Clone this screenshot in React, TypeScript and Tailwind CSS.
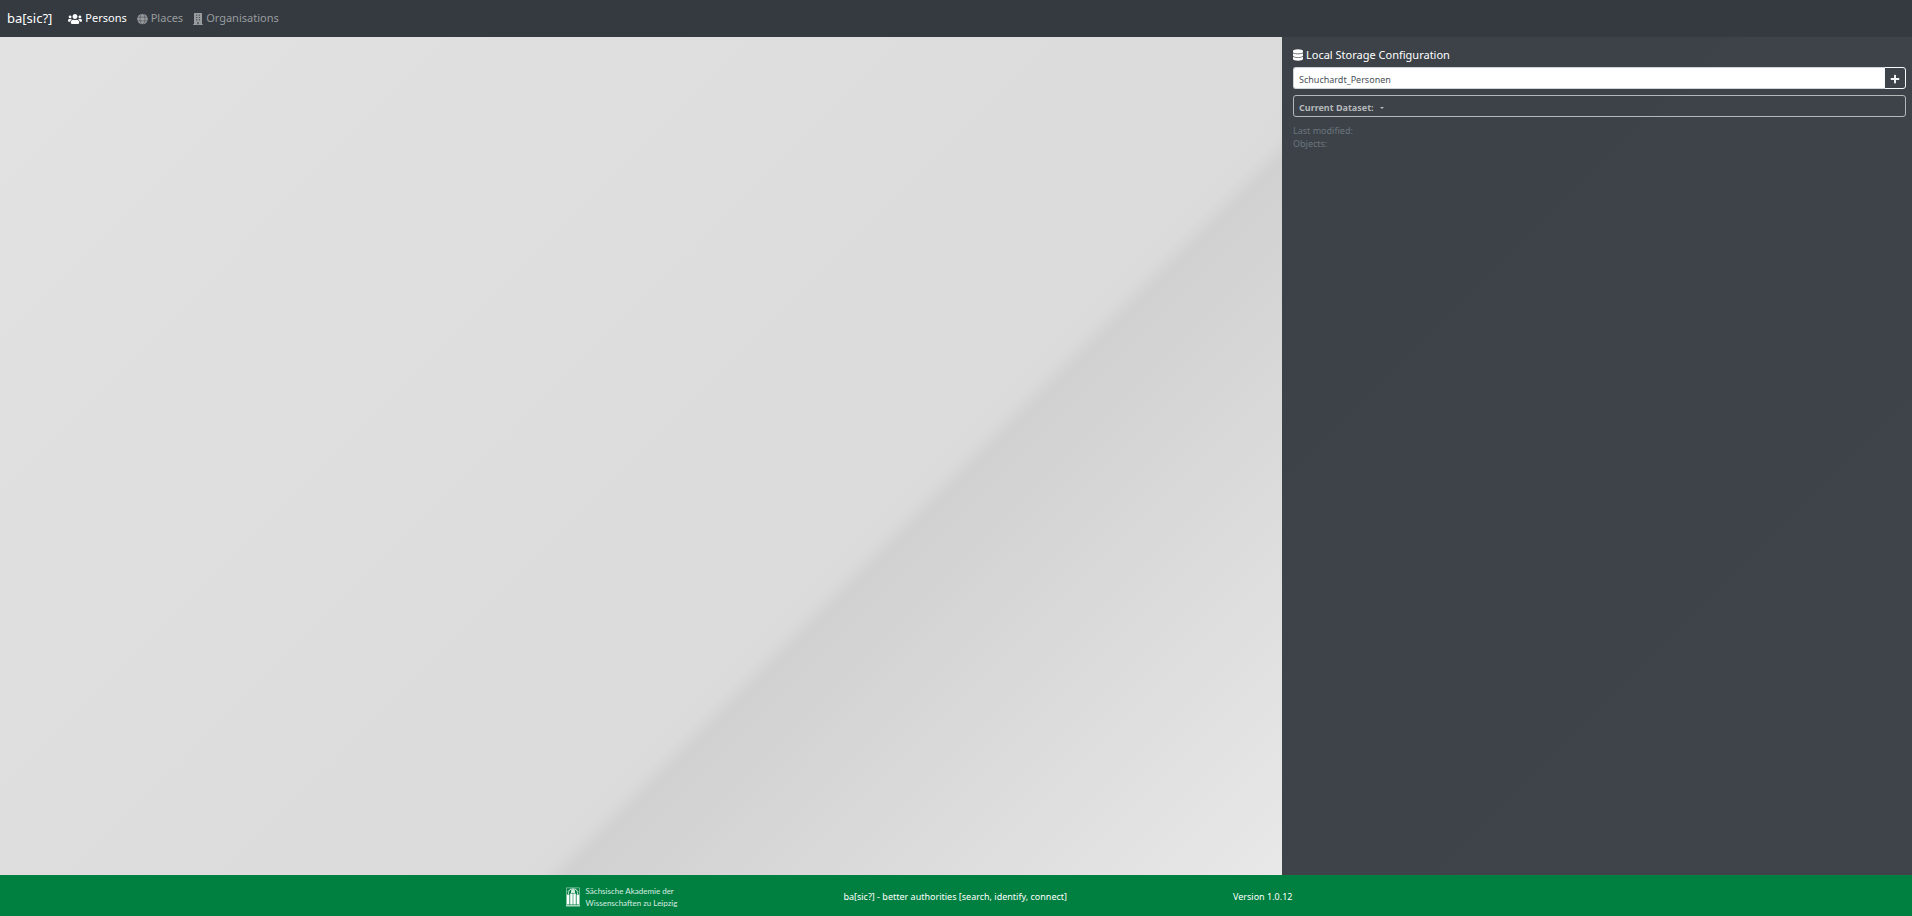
import { FaUsers, FaDatabase, FaPlus } from "react-icons/fa";

function GlobeIcon({ className }: { className: string }) {
  return (
    <svg viewBox="0 0 12 12" className={className} aria-hidden="true">
      <circle cx="6" cy="6" r="5.800" fill="currentColor" />
      <g fill="none" stroke="#343a40" strokeWidth="0.5">
        <ellipse cx="6" cy="6" rx="2.700" ry="5.900" />
        <path d="M0 4H12M0 8H12" />
      </g>
    </svg>
  );
}

function BuildingIcon({ className }: { className: string }) {
  return (
    <svg viewBox="0 0 10 12" className={className} aria-hidden="true">
      <path d="M1 0H9V11.300H10V12H0V11.300H1Z" fill="currentColor" />
      <path
        d="M3 1.700H4.300V2.800H3ZM5.700 1.700H7V2.800H5.700ZM3 4H4.300V5.100H3ZM5.700 4H7V5.100H5.700ZM3 6.300H4.300V7.400H3ZM5.700 6.300H7V7.400H5.700ZM4.300 9H5.700V11.300H4.300Z"
        fill="#343a40"
        fillOpacity="0.8"
      />
    </svg>
  );
}

function AcademyLogo() {
  return (
    <a href="#academy" className="flex items-center gap-[6px] text-[#d9ece2]">
      <svg viewBox="0 0 14 20" className="h-5 w-[14px]" fill="none" stroke="currentColor" aria-hidden="true">
        <path d="M0.5 19V0.8H13.5V19" strokeWidth="0.7" strokeOpacity="0.7" />
        <path d="M0.5 5.5 5 1.5M13.5 5.5 9 1.5" strokeWidth="0.7" strokeOpacity="0.6" />
        <path d="M2.5 7V5.6A4.5 3.8 0 0 1 11.5 5.6V7" strokeWidth="0.9" />
        <path d="M5 6V4A2 2 0 0 1 9 4V6Z" fill="currentColor" stroke="none" />
        <path d="M0.800 7.500H3.400V17.500H0.800ZM4.200 6.500H6.700V17.500H4.200ZM7.300 6.500H9.800V17.500H7.300ZM10.600 7.500H13.200V17.500H10.600Z" fill="#fff" stroke="none" />
        <path d="M0 18.800H14" strokeWidth="1.200" />
      </svg>
      <span className="font-[Lato,sans-serif] text-[8px] leading-[12px] whitespace-nowrap">
        Sächsische Akademie der
        <br />
        Wissenschaften zu Leipzig
      </span>
    </a>
  );
}

const navItems = [
  { label: "Persons", Icon: FaUsers, iconClass: "h-[12px] w-[14px]", active: true },
  { label: "Places", Icon: GlobeIcon, iconClass: "h-[12px] w-[11px]", active: false },
  { label: "Organisations", Icon: BuildingIcon, iconClass: "h-[12px] w-[10px]", active: false },
];

export default function App() {
  return (
    <div className="flex min-h-screen flex-col bg-[linear-gradient(135deg,#e2e2e2_0%,#dbdbdb_50%,#d1d1d1_51%,#fefefe_100%)] font-['Noto_Sans',sans-serif] text-[11px]">
      <header className="flex h-[37px] items-center bg-[#343a40] pl-[7px]">
        <a href="#home" className="mr-4 text-[13px] text-white">ba[sic?]</a>
        <nav className="flex items-center gap-[10px]">
          {navItems.map(({ label, Icon, iconClass, active }) => (
            <a
              key={label}
              href={"#" + label.toLowerCase()}
              className={active ? "flex items-center gap-[3px] text-white" : "flex items-center gap-[3px] text-[#999c9f]"}
            >
              <Icon className={iconClass} />
              {label}
            </a>
          ))}
        </nav>
      </header>

      <div className="flex grow">
        <main className="grow" />
        <aside className="w-[32.95%] bg-[#343a40]/95 pt-[9px] pr-[6px] pl-[11px]">
          <h1 className="flex items-center gap-[3px] text-[11px] leading-[18px] text-white">
            <FaDatabase className="h-[12px] w-[10px]" />
            <label htmlFor="dataset-name">Local Storage Configuration</label>
          </h1>
          <form className="mt-[3px] flex h-[22px]" onSubmit={(e) => e.preventDefault()}>
            <input
              id="dataset-name"
              type="text"
              defaultValue="Schuchardt_Personen"
              className="min-w-0 grow rounded-l-[3px] border border-r-0 border-[#ced4da] bg-white px-[5px] pt-[3px] text-[9px] text-[#495057] outline-none"
            />
            <button
              type="submit"
              aria-label="Add dataset"
              className="flex w-[22px] items-center justify-center rounded-r-[3px] border border-[#f8f9fa] pt-[2px] text-[#f8f9fa]"
            >
              <FaPlus className="size-[10px]" />
            </button>
          </form>
          <button
            type="button"
            className="mt-[6px] flex h-[22px] w-full items-center gap-[6px] rounded-[3px] border border-[#b5b8ba] px-[5px] pt-[3px] text-[9px] font-bold text-[#b5b8ba]"
          >
            Current Dataset:
            <span className="border-x-2 border-t-2 border-x-transparent border-t-current" />
          </button>
          <p className="mt-[7px] text-[9px] leading-[13px] text-[#6c757d]">
            Last modified:
            <br />
            Objects:
          </p>
        </aside>
      </div>

      <footer className="flex h-[41px] items-center justify-center gap-[166px] bg-[#008040] pt-[2px] pr-[54px] text-[9px] text-white">
        <AcademyLogo />
        <span>ba[sic?] - better authorities [search, identify, connect]</span>
        <span>Version 1.0.12</span>
      </footer>
    </div>
  );
}
